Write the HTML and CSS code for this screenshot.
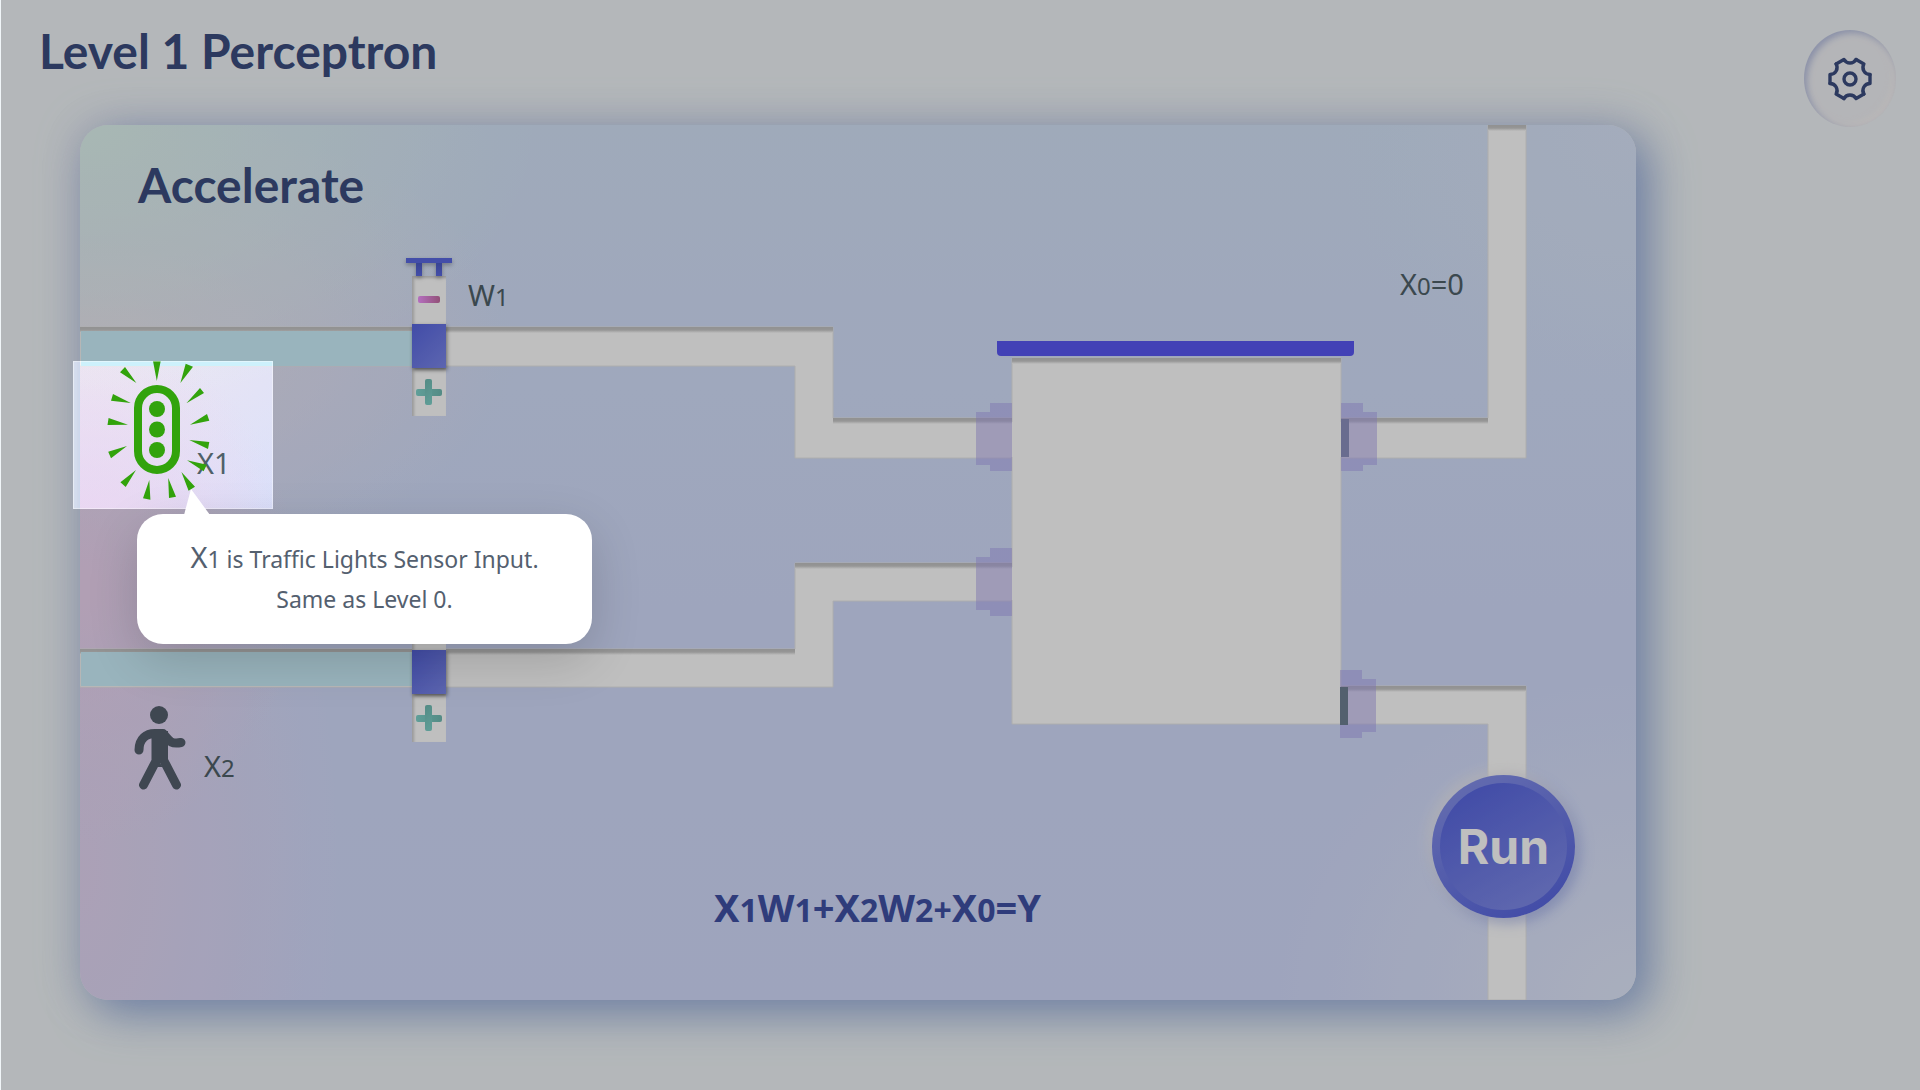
FILE: index.html
```html
<!DOCTYPE html>
<html lang="en">
<head>
<meta charset="utf-8">
<title>Level 1 Perceptron</title>
<meta name="viewport" content="width=device-width, initial-scale=1">
<link rel="stylesheet" href="styles.css">
</head>
<body>
<header class="header">
  <h1 class="title">Level 1 Perceptron</h1>
  <button class="settings" type="button" aria-label="Settings">
    <svg viewBox="-24 -24 48 48" width="48" height="48" fill="none" stroke="currentColor" stroke-width="3.4" stroke-linecap="round" stroke-linejoin="round">
      <defs><path id="tooth" d="M20,-4.5 L20,4.5 C14.5,4.5 11.1,10.3 13.9,15.1"/></defs>
      <use href="#tooth"/>
      <use href="#tooth" transform="rotate(60)"/>
      <use href="#tooth" transform="rotate(120)"/>
      <use href="#tooth" transform="rotate(180)"/>
      <use href="#tooth" transform="rotate(240)"/>
      <use href="#tooth" transform="rotate(300)"/>
      <circle r="6"/>
    </svg>
  </button>
</header>

<main class="board">
  <h2 class="title">Accelerate</h2>

  <svg class="pipes" viewBox="80 125 1556 875" width="1556" height="875" aria-hidden="true">
    <defs>
      <linearGradient id="lip" x1="0" y1="0" x2="0" y2="1">
        <stop offset="0" stop-color="#c2c2c2"/><stop offset=".5" stop-color="#c8c8c8"/><stop offset="1" stop-color="#fff"/>
      </linearGradient>
    </defs>
    <g fill="#fff" stroke="#e8e8e8" stroke-width="1">
      <path d="M80 327H833V418H1012V458H795V366H80Z"/>
      <path d="M80 649H795V563H1012V601H833V687H80Z"/>
      <path d="M1341 418H1488V125H1526V458H1341Z"/>
      <path d="M1341 686H1526V1000H1488V724H1341Z"/>
      <path d="M1012 358H1341V724H1012Z"/>
    </g>
    <path fill="#fff" d="M1008 422h8v35h-8zM1008 567h8v33h-8zM1337 422h8v35h-8zM1337 690h8v33h-8z"/>
    <g fill="url(#lip)">
      <path d="M80 327H833V333H80Z"/>
      <path d="M833 418H1012V424H833Z"/>
      <path d="M80 649H795V655H80Z"/>
      <path d="M795 563H1012V569H795Z"/>
      <path d="M1012 358H1341V364H1012Z"/>
      <path d="M1341 418H1488V424H1341Z"/>
      <path d="M1341 686H1526V692H1341Z"/>
      <path d="M1488 125H1526V131H1488Z"/>
    </g>
    <g fill="#cdf1fc">
      <path d="M81 331H412V366H81Z"/>
      <path d="M81 652H412V686H81Z"/>
    </g>
    <g fill="#6f8093">
      <path d="M1341 419h8v38h-8z"/>
    </g>
    <g fill="#a99fec" fill-opacity=".5">
      <path d="M1012 403H990V412H976V465H990V471H1012Z"/>
      <path d="M1012 548H990V557H976V610H990V616H1012Z"/>
      <path d="M1341 403H1363V412H1377V465H1363V471H1341Z"/>
      <path d="M1340 670H1362V679H1376V732H1362V738H1340Z"/>
    </g>
    <path fill="#6f8093" d="M1340 687h8v38h-8z"/>
    <path fill="#5957f3" d="M997 341H1354V352Q1354 356 1350 356H1001Q997 356 997 352Z"/>
    <g fill="none" stroke="#545f6d" stroke-width="9" stroke-linecap="round" stroke-linejoin="round">
      <circle cx="159" cy="715" r="9" fill="#545f6d" stroke="none"/>
      <path d="M139 750C139 739 146 733 156 733.500H163C168 739 170 745 181 742.500"/>
      <path d="M143.500 785L156 761M176.500 785L164 761"/>
      <path d="M151.500 731H168V759L166 763H153L151.500 759Z" fill="#545f6d" stroke="none"/>
      <path d="M159 762L156 767H163Z" fill="#545f6d" stroke="none"/>
    </g>
  </svg>

  <div class="valve valve-1">
    <span class="handle"></span>
    <button class="step minus" type="button" aria-label="Decrease W1"></button>
    <span class="gate"></span>
    <button class="step plus" type="button" aria-label="Increase W1"></button>
  </div>
  <div class="valve valve-2">
    <span class="handle"></span>
    <button class="step minus" type="button" aria-label="Decrease W2"></button>
    <span class="gate"></span>
    <button class="step plus" type="button" aria-label="Increase W2"></button>
  </div>

  <span class="label label-w1">W<small>1</small></span>
  <span class="label label-x1">X1</span>
  <span class="label label-x2">X<small>2</small></span>
  <span class="label label-x0">X<small>0</small>=0</span>
  <p class="formula">X<small>1</small>W<small>1</small>+X<small>2</small>W<small>2+</small>X<small>0</small>=Y</p>

  <svg class="traffic" viewBox="104 361 108 142" width="108" height="142" fill="#32a30c" role="img" aria-label="Traffic lights sensor">
    <rect x="138" y="389" width="38" height="81" rx="19" fill="none" stroke="#32a30c" stroke-width="8"/>
    <circle cx="157" cy="409" r="8"/><circle cx="157" cy="429.500" r="8"/><circle cx="157" cy="450" r="8"/>
    <path d="M153 361H160.700L156.800 381ZM185.700 363.700L193 366.700L180.400 383ZM200 388L204 393L186.400 403.300ZM207 414L209.300 420.700L190 424.700ZM209.300 442L208 449L189.300 440ZM206.800 464.700L203.600 471.300L187 460.300ZM195 486.700L188.600 490.700L181.400 472ZM176 496.700L169 498L168.200 478ZM150.400 499.700L143 498.300L149.300 480ZM125.700 487L120.400 482.300L136 470ZM111 458.300L108.200 451.700L127 446ZM107.500 425L108.600 418L128 424.700ZM111 400.700L113 394L130.700 403ZM120 372.300L125 367L136.400 383Z"/>
  </svg>

  <button class="run" type="button">Run</button>
</main>

<div class="tour">
  <div class="spotlight"></div>
  <div class="tip" role="dialog" aria-label="Hint">
    <svg class="tip-arrow" viewBox="0 0 26 26" width="26" height="26" fill="#fff" aria-hidden="true"><path d="M7 0L26 26H0Z"/></svg>
    <p class="tip-text"><span class="tip-key">X</span>1 is Traffic Lights Sensor Input.<br>Same as Level 0.</p>
  </div>
</div>
</body>
</html>
```
FILE: styles.css
```css
* {
  box-sizing: border-box;
}

body {
  margin: 0;
  min-height: 100vh;
  position: relative;
  overflow-x: hidden;
  background: #f0f5f8;
  color: #4f6068;
  font-family: "Noto Sans", "Open Sans", sans-serif;
}

button {
  padding: 0;
  border: 0;
  cursor: pointer;
}

.header {
  display: flex;
  justify-content: space-between;
  align-items: flex-start;
  padding: 23px 24px 0 39px;
}

.title {
  margin: 0;
  color: #3b4d7f;
  font: 700 48px/56px Lato, sans-serif;
}

.settings {
  display: flex;
  align-items: center;
  justify-content: center;
  width: 92px;
  height: 97px;
  margin: 7px 0 -2px;
  border-radius: 50%;
  background: #f1f2f6;
  color: #3b4d7f;
  box-shadow: inset 3px 3px 6px rgba(130, 145, 205, .5), inset -3px -3px 6px rgba(255, 250, 246, .5);
}

/* Game board: a free canvas with pipes, valves and labels */
.board {
  position: relative;
  isolation: isolate;
  min-height: 875px;
  margin: 0 284px 90px 80px;
  padding: 32px 58px;
  border-radius: 28px;
  background:
    radial-gradient(ellipse 460px 280px at 0 0, #e0f5f0 0, rgba(224, 245, 240, 0) 100%),
    radial-gradient(ellipse 220px 260px at 0 460px, rgba(238, 212, 240, .95) 0, rgba(238, 212, 240, 0) 100%),
    radial-gradient(ellipse 440px 240px at 0 220px, rgba(242, 230, 240, .9) 0, rgba(242, 230, 240, 0) 100%),
    radial-gradient(ellipse 260px 560px at 0 85%, rgba(231, 214, 242, .9) 0, rgba(231, 214, 242, 0) 100%),
    radial-gradient(ellipse 360px 320px at 100% 100%, #e2e9fc 0, rgba(226, 233, 252, 0) 100%),
    radial-gradient(ellipse 300px 300px at 100% 0, #dbe6fb 0, rgba(219, 230, 251, 0) 100%),
    linear-gradient(180deg, #d4e3f9 0, #d4e0fc 30%, #d3ddfd 55%, #d3dbfd 100%);
  box-shadow:
    14px 14px 44px rgba(105, 140, 205, .6),
    0 0 44px rgba(150, 155, 205, .35);
}

.pipes {
  position: absolute;
  left: 0;
  top: 0;
}

.traffic {
  position: absolute;
  left: 24px;
  top: 236px;
}

.valve {
  position: absolute;
  left: 326px;
  display: flex;
  flex-direction: column;
  align-items: center;
  width: 46px;
}

.valve-1 {
  top: 133px;
}

.valve-2 {
  top: 459px;
}

.handle {
  position: relative;
  z-index: 1;
  width: 46px;
  height: 18px;
  border-top: 5px solid #5a68e2;
  background:
    linear-gradient(#4b5bc4, #5a68e2) 10px 0 / 6px 13px no-repeat,
    linear-gradient(#4b5bc4, #5a68e2) 30px 0 / 6px 13px no-repeat;
  filter: drop-shadow(0 2px 2px rgba(0, 0, 0, .3));
}

.step {
  position: relative;
  width: 34px;
  height: 48px;
  background: #fff;
  box-shadow: inset 2px 2px 3px rgba(0, 0, 0, .2);
}

.step::before,
.plus::after {
  content: "";
  position: absolute;
  left: 6px;
  top: 20px;
  width: 22px;
  height: 7px;
  border-radius: 2px;
  background: linear-gradient(90deg, #f194ff, #c36b9f);
}

.plus::before {
  left: 4px;
  top: 21px;
  width: 26px;
  background: linear-gradient(90deg, #80d4cc, #70bab2);
}

.plus::after {
  left: 13px;
  top: 11px;
  width: 7px;
  height: 26px;
  background: linear-gradient(135deg, #70bab2, #80d4cc);
}

.gate {
  position: relative;
  z-index: 1;
  width: 34px;
  height: 44px;
  background: linear-gradient(135deg, #5866e0, #7c88eb);
  box-shadow: 1px 2px 4px rgba(0, 0, 0, .45);
}

.label {
  position: absolute;
  font-size: 29px;
  line-height: 32px;
  white-space: nowrap;
}

.label small {
  font-size: 24px;
}

.label-w1 {
  left: 388px;
  top: 154px;
}

.label-x1 {
  left: 117px;
  top: 322px;
}

.label-x2 {
  left: 124px;
  top: 625px;
}

.label-x0 {
  left: 1320px;
  top: 143px;
}

.formula {
  position: absolute;
  left: 634px;
  top: 762px;
  margin: 0;
  color: #3f50a5;
  font-size: 38px;
  font-weight: 700;
  line-height: 40px;
  white-space: nowrap;
}

.formula small {
  font-size: 32px;
}

.run {
  position: absolute;
  left: 1352px;
  top: 650px;
  width: 143px;
  height: 143px;
  border: 8px solid transparent;
  border-radius: 50%;
  background:
    linear-gradient(150deg, #5866e0 10%, #8590ea 100%) padding-box,
    linear-gradient(150deg, #8590ea 10%, #5866e0 90%) border-box;
  box-shadow: -4px -4px 14px rgba(255, 250, 240, .6), 4px 4px 14px rgba(110, 130, 220, .5);
  color: #fff;
  font: 700 48px/56px Inter, sans-serif;
}

/* Guided tour: dims everything outside the spotlight */
.tour {
  position: absolute;
  inset: 0 0 0 1px;
  overflow: hidden;
}

.spotlight {
  position: absolute;
  left: 72px;
  top: 361px;
  width: 200px;
  height: 148px;
  border: 1px solid rgba(255, 255, 255, .4);
  box-shadow: 0 0 0 3000px rgba(0, 0, 0, .25);
}

.tip {
  position: absolute;
  left: 136px;
  top: 514px;
  width: 455px;
  padding: 25px 0;
  border-radius: 26px;
  background: #fff;
  box-shadow: 0 16px 50px rgba(0, 0, 0, .16);
  color: #54606f;
}

.tip-arrow {
  position: absolute;
  left: 47px;
  top: -25px;
}

.tip-text {
  margin: 0;
  font-size: 23px;
  line-height: 40px;
  text-align: center;
}

.tip-key {
  font-size: 29px;
  line-height: 32px;
}
```
